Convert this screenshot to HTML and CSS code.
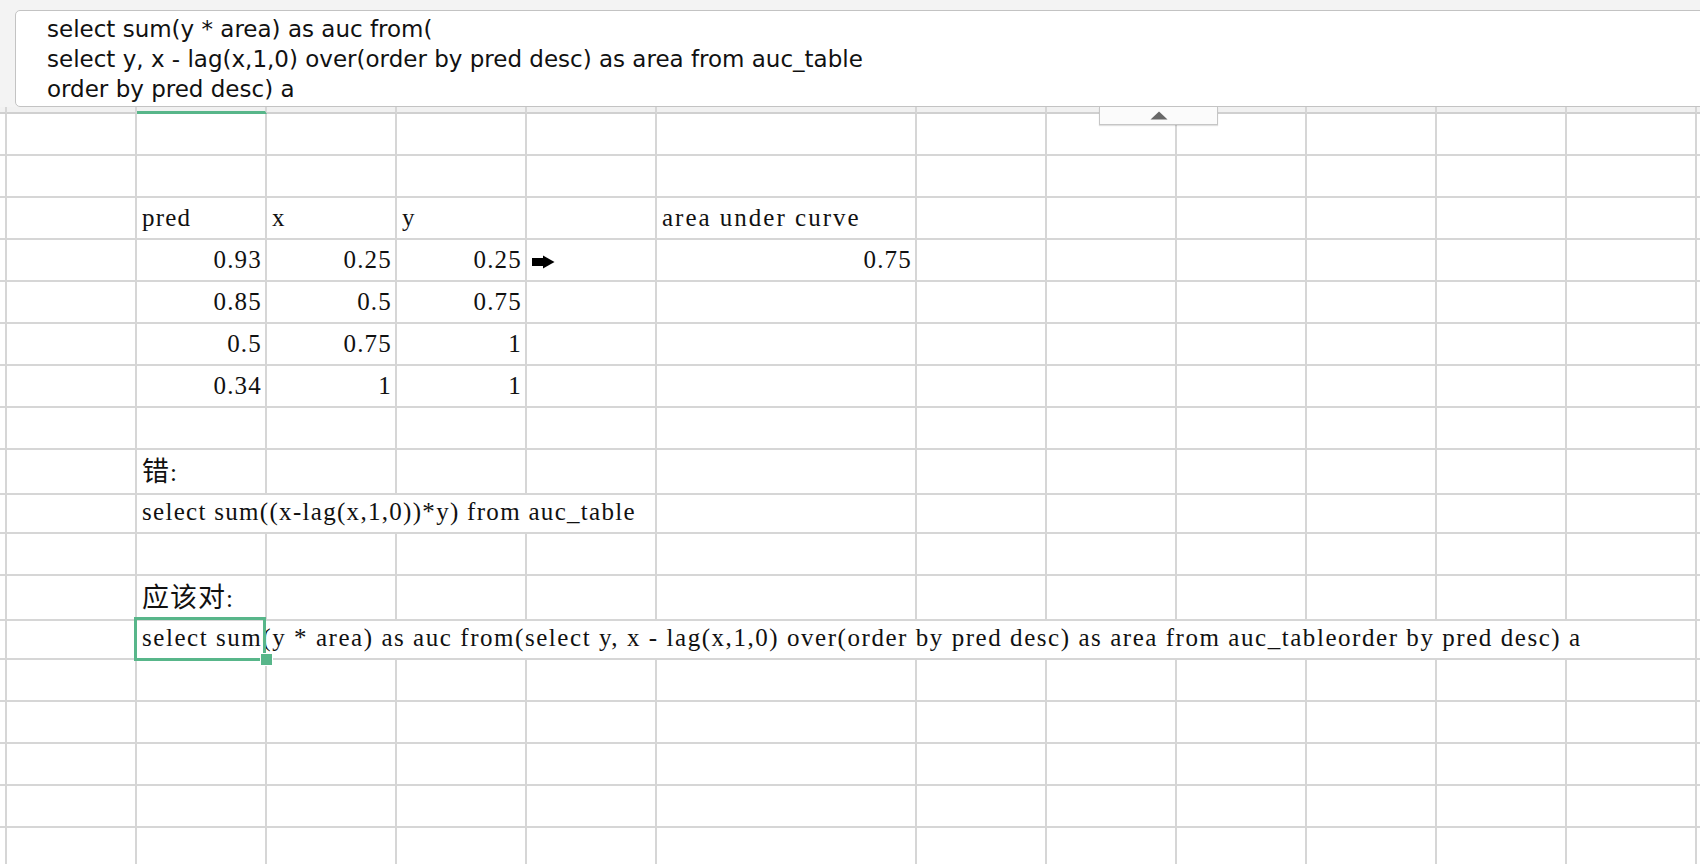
FILE: index.html
```html
<!DOCTYPE html>
<html lang="zh">
<head>
<meta charset="utf-8">
<title>auc</title>
<link rel="stylesheet" href="styles.css">
</head>
<body>
<div class="app">
  <div class="formula-area">
    <div class="formula-box">
      <div>select sum(y * area) as auc from(</div>
      <div>select y, x - lag(x,1,0) over(order by pred desc) as area from auc_table</div>
      <div>order by pred desc) a</div>
    </div>
  </div>

  <div class="row head"><div class="c"></div><div class="c"></div><div class="c active"></div><div class="c"></div><div class="c"></div><div class="c"></div><div class="c"></div><div class="c"></div><div class="c"></div><div class="c"></div><div class="c"></div><div class="c"></div><div class="c"></div><div class="c edge"></div></div>

  <div class="sheet">
    <div class="row"><div class="c"></div><div class="c"></div><div class="c"></div><div class="c"></div><div class="c"></div><div class="c"></div><div class="c"></div><div class="c"></div><div class="c"></div><div class="c"></div><div class="c"></div><div class="c"></div><div class="c"></div><div class="c edge"></div></div>
    <div class="row"><div class="c"></div><div class="c"></div><div class="c"></div><div class="c"></div><div class="c"></div><div class="c"></div><div class="c"></div><div class="c"></div><div class="c"></div><div class="c"></div><div class="c"></div><div class="c"></div><div class="c"></div><div class="c edge"></div></div>
    <div class="row"><div class="c"></div><div class="c"></div><div class="c">pred</div><div class="c">x</div><div class="c">y</div><div class="c"></div><div class="c wide">area under curve</div><div class="c"></div><div class="c"></div><div class="c"></div><div class="c"></div><div class="c"></div><div class="c"></div><div class="c edge"></div></div>
    <div class="row"><div class="c"></div><div class="c"></div><div class="c num">0.93</div><div class="c num">0.25</div><div class="c num">0.25</div><div class="c arrow-cell"><svg class="arrow" width="23" height="14" viewBox="0 0 23 14"><rect x="0" y="3" width="12" height="8" fill="#000"/><polygon points="11,0.5 22.5,7 11,13.5" fill="#000"/></svg></div><div class="c num">0.75</div><div class="c"></div><div class="c"></div><div class="c"></div><div class="c"></div><div class="c"></div><div class="c"></div><div class="c edge"></div></div>
    <div class="row"><div class="c"></div><div class="c"></div><div class="c num">0.85</div><div class="c num">0.5</div><div class="c num">0.75</div><div class="c"></div><div class="c"></div><div class="c"></div><div class="c"></div><div class="c"></div><div class="c"></div><div class="c"></div><div class="c"></div><div class="c edge"></div></div>
    <div class="row"><div class="c"></div><div class="c"></div><div class="c num">0.5</div><div class="c num">0.75</div><div class="c num">1</div><div class="c"></div><div class="c"></div><div class="c"></div><div class="c"></div><div class="c"></div><div class="c"></div><div class="c"></div><div class="c"></div><div class="c edge"></div></div>
    <div class="row"><div class="c"></div><div class="c"></div><div class="c num">0.34</div><div class="c num">1</div><div class="c num">1</div><div class="c"></div><div class="c"></div><div class="c"></div><div class="c"></div><div class="c"></div><div class="c"></div><div class="c"></div><div class="c"></div><div class="c edge"></div></div>
    <div class="row"><div class="c"></div><div class="c"></div><div class="c"></div><div class="c"></div><div class="c"></div><div class="c"></div><div class="c"></div><div class="c"></div><div class="c"></div><div class="c"></div><div class="c"></div><div class="c"></div><div class="c"></div><div class="c edge"></div></div>
    <div class="row"><div class="c"></div><div class="c"></div><div class="c"><span class="cjk">错</span>:</div><div class="c"></div><div class="c"></div><div class="c"></div><div class="c"></div><div class="c"></div><div class="c"></div><div class="c"></div><div class="c"></div><div class="c"></div><div class="c"></div><div class="c edge"></div></div>
    <div class="row"><div class="c"></div><div class="c"></div><div class="c span4">select sum((x-lag(x,1,0))*y) from auc_table</div><div class="c"></div><div class="c"></div><div class="c"></div><div class="c"></div><div class="c"></div><div class="c"></div><div class="c"></div><div class="c edge"></div></div>
    <div class="row"><div class="c"></div><div class="c"></div><div class="c"></div><div class="c"></div><div class="c"></div><div class="c"></div><div class="c"></div><div class="c"></div><div class="c"></div><div class="c"></div><div class="c"></div><div class="c"></div><div class="c"></div><div class="c edge"></div></div>
    <div class="row"><div class="c"></div><div class="c"></div><div class="c"><span class="cjk">应该对</span>:</div><div class="c"></div><div class="c"></div><div class="c"></div><div class="c"></div><div class="c"></div><div class="c"></div><div class="c"></div><div class="c"></div><div class="c"></div><div class="c"></div><div class="c edge"></div></div>
    <div class="row"><div class="c"></div><div class="c"></div><div class="c span11">select sum(y * area) as auc from(select y, x - lag(x,1,0) over(order by pred desc) as area from auc_tableorder by pred desc) a</div><div class="c edge"></div></div>
    <div class="row"><div class="c"></div><div class="c"></div><div class="c"></div><div class="c"></div><div class="c"></div><div class="c"></div><div class="c"></div><div class="c"></div><div class="c"></div><div class="c"></div><div class="c"></div><div class="c"></div><div class="c"></div><div class="c edge"></div></div>
    <div class="row"><div class="c"></div><div class="c"></div><div class="c"></div><div class="c"></div><div class="c"></div><div class="c"></div><div class="c"></div><div class="c"></div><div class="c"></div><div class="c"></div><div class="c"></div><div class="c"></div><div class="c"></div><div class="c edge"></div></div>
    <div class="row"><div class="c"></div><div class="c"></div><div class="c"></div><div class="c"></div><div class="c"></div><div class="c"></div><div class="c"></div><div class="c"></div><div class="c"></div><div class="c"></div><div class="c"></div><div class="c"></div><div class="c"></div><div class="c edge"></div></div>
    <div class="row"><div class="c"></div><div class="c"></div><div class="c"></div><div class="c"></div><div class="c"></div><div class="c"></div><div class="c"></div><div class="c"></div><div class="c"></div><div class="c"></div><div class="c"></div><div class="c"></div><div class="c"></div><div class="c edge"></div></div>
    <div class="row"><div class="c"></div><div class="c"></div><div class="c"></div><div class="c"></div><div class="c"></div><div class="c"></div><div class="c"></div><div class="c"></div><div class="c"></div><div class="c"></div><div class="c"></div><div class="c"></div><div class="c"></div><div class="c edge"></div></div>
  </div>

  <div class="selection"><span class="handle"></span></div>
  <div class="toggle"><svg width="18" height="9" viewBox="0 0 18 9"><polygon points="0.5,8.5 17.5,8.5 9,0.5" fill="#686868"/></svg></div>
</div>
</body>
</html>
```

FILE: styles.css
```css
html, body {
  margin: 0;
  padding: 0;
  background: #ffffff;
}

.app {
  position: relative;
  width: 1700px;
  height: 864px;
  overflow: hidden;
  background: #ffffff;
}

.formula-area {
  height: 107px;
  box-sizing: border-box;
  padding: 10px 0 0 15px;
  background: #f3f3f3;
  overflow: hidden;
}

.formula-box {
  width: 1760px;
  height: 97px;
  box-sizing: border-box;
  background: #ffffff;
  border: 1px solid #c3c3c3;
  border-radius: 5px;
  padding: 3px 0 0 31px;
  font-family: "DejaVu Sans", "Noto Sans", sans-serif;
  font-size: 23px;
  line-height: 30px;
  color: #111111;
  white-space: nowrap;
}

.row {
  display: grid;
  grid-template-columns: 7px repeat(5, 130px) 260px repeat(6, 130px) 3px;
  height: 42px;
}

.row.head {
  height: 7px;
  background: #f1f1f1;
}

.c {
  box-sizing: border-box;
  min-width: 0;
  border-right: 2px solid #d6d6d6;
  border-bottom: 2px solid #d6d6d6;
  padding: 0 4px 0 5px;
  font-family: "Liberation Serif", "Noto Sans CJK SC", serif;
  font-size: 25px;
  line-height: 40px;
  letter-spacing: 1.2px;
  color: #111111;
  white-space: nowrap;
  overflow: visible;
}

.row > .c:first-child {
  padding: 0;
}

.row.head .c {
  border-bottom-color: #d0d0d0;
}

.row.head .c.active {
  border-bottom: 3px solid #58b68a;
}

.c.edge {
  border-right: none;
  padding: 0;
}

.c.num {
  text-align: right;
  padding-right: 3px;
}

.c.wide {
  letter-spacing: 2px;
}

.c.span4 {
  grid-column: span 4;
  letter-spacing: 1.3px;
}

.c.span11 {
  grid-column: span 11;
  letter-spacing: 1.55px;
}

.cjk {
  font-family: "Noto Sans CJK SC", sans-serif;
  font-size: 27px;
  letter-spacing: 1px;
}

.arrow-cell {
  display: flex;
  align-items: center;
  padding-top: 3px;
}

.arrow {
  display: block;
}

.selection {
  position: absolute;
  left: 134px;
  top: 617px;
  width: 132px;
  height: 44px;
  box-sizing: border-box;
  border: 3px solid #58b68a;
}

.handle {
  position: absolute;
  right: -10px;
  bottom: -8px;
  width: 13px;
  height: 13px;
  box-sizing: border-box;
  background: #58b68a;
  border: 1.5px solid #ffffff;
}

.toggle {
  position: absolute;
  left: 1099px;
  top: 107px;
  width: 119px;
  height: 18px;
  box-sizing: border-box;
  background: #fbfbfb;
  border: 1px solid #c6c6c6;
  border-top: none;
  box-shadow: 0 1px 1px rgba(0, 0, 0, 0.12);
  display: flex;
  justify-content: center;
  align-items: flex-start;
  padding-top: 4px;
}

.toggle svg {
  display: block;
}
```
